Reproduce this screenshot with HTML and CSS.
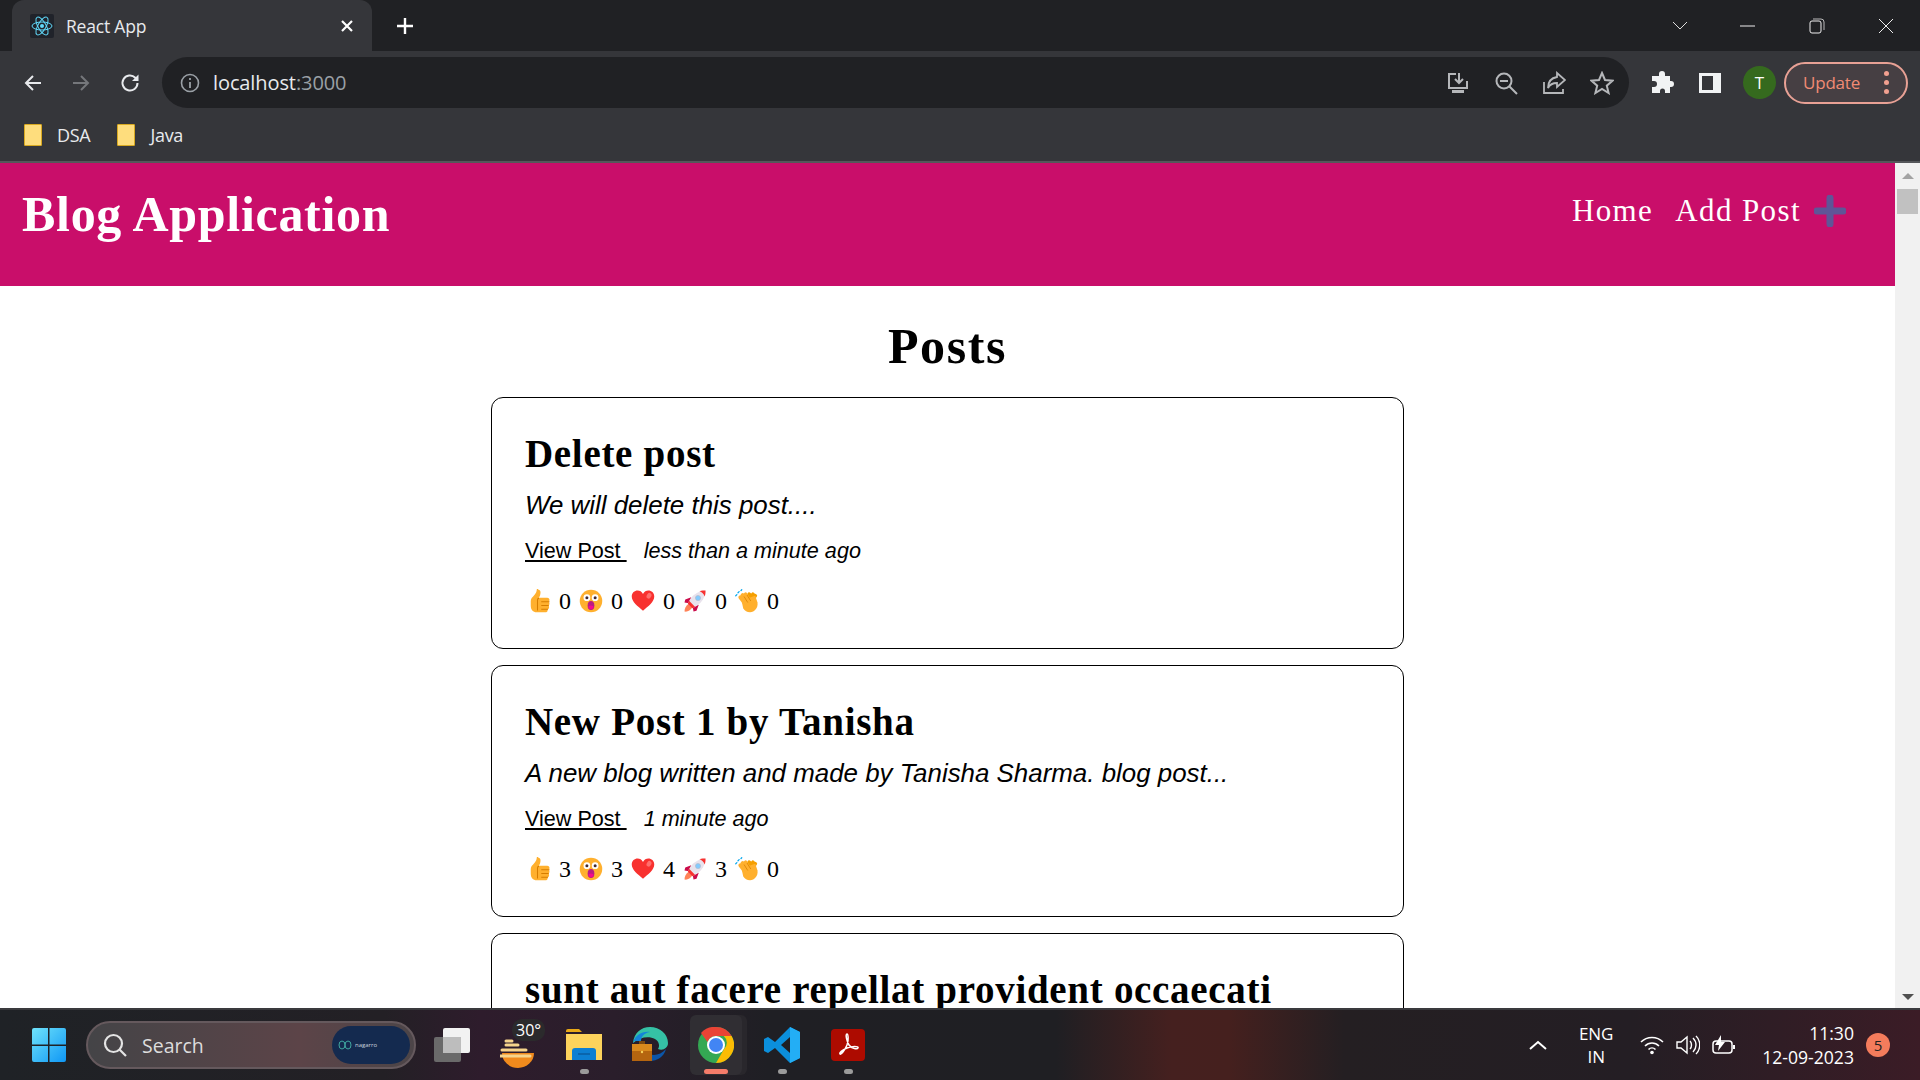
FILE: index.html
```html
<!DOCTYPE html>
<html lang="en">
<head>
    <meta charset="UTF-8">
    <meta name="viewport" content="width=device-width, initial-scale=1.0">
    <title>React App</title>
    <link rel="stylesheet" href="styles.css">
</head>
<body>
    <svg class="defs" width="0" height="0">
        <symbol id="e-thumb" viewBox="0 0 32 32">
            <path fill="#FFB02E" d="M15 1c2 0 3 1.500 3 3.500 0 3-1 5-2 7h11c2 0 3 1.500 3 3 0 1-.5 2-1.200 2.500.7.600 1.200 1.500 1.200 2.500s-.5 2-1.300 2.500c.5.600.8 1.300.8 2.200 0 1.500-1 2.600-2.300 3 .2.400.3.800.3 1.300 0 1.500-1.300 2.500-3 2.500H13c-5 0-8-3-8-9v-6c0-3 2-5 4-7 3-3 4-6 4-8 0-1 .8-1.500 2-1.500z"/>
            <path fill="none" stroke="#D67D00" stroke-width="1.400" d="M16 12.500c-1 0-2 1-2 2v14M19 17h11M19 22h10M19 27h9"/>
        </symbol>
        <symbol id="e-wow" viewBox="0 0 32 32">
            <circle cx="16" cy="16" r="15" fill="#FFB02E"/>
            <circle cx="10.500" cy="11.500" r="4.500" fill="#fff"/>
            <circle cx="21.500" cy="11.500" r="4.500" fill="#fff"/>
            <circle cx="10.500" cy="11.500" r="2" fill="#402A32"/>
            <circle cx="21.500" cy="11.500" r="2" fill="#402A32"/>
            <ellipse cx="16" cy="22" rx="4.500" ry="6" fill="#BB1D80"/>
            <path fill="#F70A8D" d="M12.500 25a3.500 3 0 0 1 7 0 4.500 5 0 0 1-7 0z"/>
        </symbol>
        <symbol id="e-heart" viewBox="0 0 32 32">
            <path fill="#F8312F" d="M16 29C9 23 1 17 1 10c0-5 3.800-8 7.800-8 3 0 5.700 1.500 7.200 4.500C17.500 3.500 20.200 2 23.200 2 27.200 2 31 5 31 10c0 7-8 13-15 19z"/>
            <ellipse cx="24" cy="9" rx="3" ry="4" fill="#FF6F6D" transform="rotate(30 24 9)"/>
        </symbol>
        <symbol id="e-rocket" viewBox="0 0 32 32">
            <path fill="#FF8257" d="M7 20l5 5c-2 3-6 6-10 5 0-4 2-8 5-10z"/>
            <path fill="#CA0B4A" d="M11 11l-8 3-1 4 6 1zM21 21l-3 8-4 1-1-6z"/>
            <path fill="#E8E2EC" d="M30 2C22 2 14 7 10 13c-2 3-3 5-3.500 7l5.500 5.500c2-.5 4-1.500 7-3.500 6-4 11-12 11-20z"/>
            <path fill="#F8312F" d="M22 3c3 1 6 4 7 7 1-3 1-5 1-8-3 0-5 0-8 1zM6.500 20c.5-2 1-3 1.600-4.200l8.100 8.100c-1.200.6-2.200 1.100-4.200 1.600z"/>
            <circle cx="20" cy="12" r="3.400" fill="#83CBFF" stroke="#AEB9C6" stroke-width=".8"/>
        </symbol>
        <symbol id="e-clap" viewBox="0 0 32 32">
            <g fill="none" stroke-linecap="round" stroke-width="5">
                <path stroke="#F59F00" d="M16 14l3-7M19 15l5-8M22 16l5-7"/>
                <path stroke="#FFB02E" d="M14 20L7 11M17 19l-7-11M20 17l-6-10"/>
            </g>
            <path fill="#FFB02E" d="M9 17l12-6 6-2 3 9c1 7-4 13-10 13-4 0-7-2-9-5z"/>
            <path fill="none" stroke="#D67D00" stroke-width="1" d="M12 10l5 8M16 8l5 8"/>
            <path fill="none" stroke="#00A6ED" stroke-width="1.600" stroke-linecap="round" d="M4 5l1.500-1.500M1 9l1.500-1.500M8 2l1-1"/>
        </symbol>
    </svg>

    <header class="chrome">
        <div class="tabstrip">
            <div class="tab">
                <svg class="favicon" viewBox="0 0 24 24" width="24" height="24">
                    <rect width="24" height="24" rx="2" fill="#20232a"/>
                    <circle cx="12" cy="12" r="2" fill="#61dafb"/>
                    <g fill="none" stroke="#61dafb" stroke-width="1">
                        <ellipse cx="12" cy="12" rx="10" ry="4"/>
                        <ellipse cx="12" cy="12" rx="10" ry="4" transform="rotate(60 12 12)"/>
                        <ellipse cx="12" cy="12" rx="10" ry="4" transform="rotate(120 12 12)"/>
                    </g>
                </svg>
                <span class="tab-title">React App</span>
                <svg class="tab-close" viewBox="0 0 14 14" width="14" height="14"><path d="M2 2l10 10M12 2L2 12" stroke="#fff" stroke-width="2.200"/></svg>
            </div>
            <svg class="newtab" viewBox="0 0 20 20" width="20" height="20"><path d="M10 2v16M2 10h16" stroke="#fff" stroke-width="2.400"/></svg>
            <div class="winctl">
                <svg viewBox="0 0 16 10" width="16" height="10"><path d="M1 1l7 7 7-7" fill="none" stroke="#ddd"/></svg>
                <svg class="win-min" viewBox="0 0 16 10" width="16" height="10"><path d="M0 5h15" stroke="#eee"/></svg>
                <svg class="win-max" viewBox="0 0 16 16" width="16" height="16"><rect x="1" y="3" width="11" height="12" rx="2" fill="none" stroke="#eee"/><path d="M4 1h8a3 3 0 0 1 3 3v8" fill="none" stroke="#bbb"/></svg>
                <svg class="win-close" viewBox="0 0 16 16" width="16" height="16"><path d="M1 1l14 14M15 1L1 15" stroke="#eee"/></svg>
            </div>
        </div>

        <div class="toolbar">
            <svg class="nav-icon" viewBox="0 0 20 20" width="20" height="20"><path d="M18 10H3M10 3l-7 7 7 7" fill="none" stroke="#e8eaed" stroke-width="2"/></svg>
            <svg class="nav-icon" viewBox="0 0 20 20" width="20" height="20"><path d="M2 10h15M10 3l7 7-7 7" fill="none" stroke="#75777b" stroke-width="2"/></svg>
            <svg class="nav-icon" viewBox="0 0 22 22" width="22" height="22"><path d="M18.500 11a7.500 7.500 0 1 1-2.200-5.300L18.500 8" fill="none" stroke="#e8eaed" stroke-width="2"/><path d="M19.500 2.500V9H13z" fill="#e8eaed"/></svg>
            <div class="omnibox">
                <svg class="info" viewBox="0 0 20 20" width="20" height="20"><circle cx="10" cy="10" r="8.500" fill="none" stroke="#9aa0a6" stroke-width="1.600"/><path d="M10 9v6M10 5v2" stroke="#9aa0a6" stroke-width="1.800"/></svg>
                <span class="url">localhost<span class="url-port">:3000</span></span>
                <div class="omni-actions">
                    <svg viewBox="0 0 24 24" width="24" height="24"><path d="M10 3H3v14h18v-7" fill="none" stroke="#b5b7ba" stroke-width="2"/><path d="M13 2v9M9 8l4 4 4-4" fill="none" stroke="#b5b7ba" stroke-width="2"/><path d="M6 19h12v3H6z" fill="#b5b7ba"/></svg>
                    <svg viewBox="0 0 24 24" width="24" height="24"><circle cx="10" cy="10" r="7.500" fill="none" stroke="#b5b7ba" stroke-width="2"/><path d="M6 10h8M15.500 15.500L23 23" stroke="#b5b7ba" stroke-width="2"/></svg>
                    <svg viewBox="0 0 24 24" width="24" height="24"><path d="M2 11v11h19v-4" fill="none" stroke="#b5b7ba" stroke-width="1.800"/><path d="M15 2l8 7-8 7v-4c-4 0-7 1-9 5 0-6 3-10 9-11z" fill="none" stroke="#b5b7ba" stroke-width="1.800"/></svg>
                    <svg viewBox="0 0 24 24" width="24" height="24"><path d="M12 2l3 7 7.500.7-5.700 5 1.800 7.300L12 18l-6.600 4 1.800-7.300-5.700-5L9 9z" fill="none" stroke="#b5b7ba" stroke-width="2"/></svg>
                </div>
            </div>
            <svg class="puzzle" viewBox="0 0 24 24" width="24" height="24"><path fill="#f1f3f4" d="M9 3a3 3 0 0 1 6 0v2h5v5h1a3 3 0 0 1 0 6h-1v6h-5v-2a2.500 2.500 0 0 0-5 0v2H2v-6h2a3 3 0 0 0 0-6H2V5h7z"/></svg>
            <div class="sidepanel"></div>
            <div class="avatar">T</div>
            <div class="update">
                <span>Update</span>
                <span class="kebab"><i></i><i></i><i></i></span>
            </div>
        </div>

        <div class="bookmarks">
            <div class="bookmark"><span class="folder"></span>DSA</div>
            <div class="bookmark"><span class="folder"></span>Java</div>
        </div>
    </header>

    <div class="viewport">
        <main class="page">
            <nav class="navbar">
                <h1 class="brand">Blog Application</h1>
                <div class="nav-links">
                    <a href="#">Home</a>
                    <a href="#">Add Post</a>
                    <svg class="nav-plus" viewBox="0 0 32 32" width="32" height="32"><path d="M16 3v26M3 16h26" stroke="#5f5597" stroke-width="7" stroke-linecap="round"/></svg>
                </div>
            </nav>

            <h2 class="posts-title">Posts</h2>

            <article class="card">
                <h3 class="post-title">Delete post</h3>
                <p class="post-body">We will delete this post....</p>
                <div class="post-meta">
                    <a href="#">View Post&nbsp;</a>
                    <em>less than a minute ago</em>
                </div>
                <div class="reactions">
                    <span class="reaction"><svg><use href="#e-thumb"/></svg>0</span>
                    <span class="reaction"><svg><use href="#e-wow"/></svg>0</span>
                    <span class="reaction"><svg><use href="#e-heart"/></svg>0</span>
                    <span class="reaction"><svg><use href="#e-rocket"/></svg>0</span>
                    <span class="reaction"><svg><use href="#e-clap"/></svg>0</span>
                </div>
            </article>

            <article class="card">
                <h3 class="post-title">New Post 1 by Tanisha</h3>
                <p class="post-body">A new blog written and made by Tanisha Sharma. blog post...</p>
                <div class="post-meta">
                    <a href="#">View Post&nbsp;</a>
                    <em>1 minute ago</em>
                </div>
                <div class="reactions">
                    <span class="reaction"><svg><use href="#e-thumb"/></svg>3</span>
                    <span class="reaction"><svg><use href="#e-wow"/></svg>3</span>
                    <span class="reaction"><svg><use href="#e-heart"/></svg>4</span>
                    <span class="reaction"><svg><use href="#e-rocket"/></svg>3</span>
                    <span class="reaction"><svg><use href="#e-clap"/></svg>0</span>
                </div>
            </article>

            <article class="card">
                <h3 class="post-title">sunt aut facere repellat provident occaecati</h3>
            </article>
        </main>

        <div class="scrollbar">
            <span class="arrow-up"></span>
            <span class="thumb"></span>
            <span class="arrow-down"></span>
        </div>
    </div>

    <footer class="taskbar">
        <svg class="start" viewBox="0 0 36 36" width="36" height="36">
            <defs><linearGradient id="win" x1="0" y1="0" x2="1" y2="1"><stop offset="0" stop-color="#6fe3fb"/><stop offset="1" stop-color="#0f97f5"/></linearGradient></defs>
            <path fill="url(#win)" d="M1 3a2 2 0 0 1 2-2h14v16.500H1zM18.500 1H33a2 2 0 0 1 2 2v14.500H18.500zM1 19h16v16H3a2 2 0 0 1-2-2zM18.500 19H35v14a2 2 0 0 1-2 2H18.500z"/>
        </svg>
        <div class="searchbox">
            <svg viewBox="0 0 24 24" width="24" height="24"><circle cx="10.500" cy="10.500" r="8.500" fill="none" stroke="#e4e4e4" stroke-width="2.200"/><path d="M16.500 16.500L23 23" stroke="#e4e4e4" stroke-width="2.200"/></svg>
            <span class="search-label">Search</span>
            <div class="search-badge">
                <svg viewBox="0 0 14 10" width="14" height="10"><path d="M4 1a3 4 0 1 0 0 8 3 4 0 1 0 0-8M10 1a3 4 0 1 0 0 8 3 4 0 1 0 0-8" fill="none" stroke="#3fa7a0"/></svg>
                <span>nagarro</span>
            </div>
        </div>
        <svg class="taskview" viewBox="0 0 36 36" width="36" height="36"><rect y="10" width="27" height="25" rx="2" fill="#6a6a6a"/><rect x="9" y="1" width="27" height="25" rx="2" fill="#f2f2f2"/><rect x="9" y="10" width="18" height="16" fill="#bdbdbd"/></svg>
        <div class="weather">
            <svg viewBox="0 0 36 36" width="36" height="36"><path d="M2 14a16 15 0 0 0 32 0z" transform="translate(0 6)" fill="#f08a1d"/><path d="M6 12h12M2 17h24M0 23h30M6 8h6" stroke="#f6d48c" stroke-width="3" stroke-linecap="round"/></svg>
            <span class="temp">30°</span>
        </div>
        <div class="task-app">
            <svg viewBox="0 0 36 32" width="36" height="32"><path d="M0 2a2 2 0 0 1 2-2h11l3 3h-16z" fill="#e9a917"/><path d="M0 5h36v26H0z" fill="#fdd35c"/><path d="M6 31v-9a3 3 0 0 1 3-3h18a3 3 0 0 1 3 3v9z" fill="#0d7fd2"/><path d="M12 25h12" stroke="#0a5ca0" stroke-width="1.500"/></svg>
            <i class="dot"></i>
        </div>
        <div class="task-app">
            <svg viewBox="0 0 36 36" width="36" height="36"><path d="M1 16C2 6 9 0 18 0c10 0 18 7 18 16 0 5-5 8-10 6 2-3 1-8-3-10-6-3-15-2-22 4z" fill="#35c1a5"/><path d="M1 16C3 8 10 4 18 5c-7 1-9 6-9 9H1z" fill="#1485d8"/><path d="M14 24c4 6 14 5 20-2-2 8-9 12-16 12z" fill="#0b55a8"/><path d="M0 17h20v17H0z" fill="#b5650f"/><path d="M0 17h20v7H0z" fill="#d98a1d"/><path d="M7 14h6v3H7z" fill="#7d4a10"/><circle cx="10" cy="25" r="1.200" fill="#f7d15a"/></svg>
        </div>
        <div class="task-app task-active">
            <svg viewBox="0 0 36 36" width="36" height="36"><circle cx="18" cy="18" r="18" fill="#34a853"/><path d="M18 0a18 18 0 0 1 15.600 9H18a9 9 0 0 0-8.500 6L3 6a18 18 0 0 1 15-6z" fill="#ea4335"/><path d="M33.600 9A18 18 0 0 1 18 36l7.800-13.500A9 9 0 0 0 25.800 9z" fill="#fbbc04"/><circle cx="18" cy="18" r="9" fill="#fff"/><circle cx="18" cy="18" r="7" fill="#4285f4"/></svg>
            <i class="dot dot-active"></i>
        </div>
        <div class="task-app">
            <svg viewBox="0 0 36 36" width="36" height="36"><path d="M26 0l10 5v26l-10 5-15-15-7 5-4-2V12l4-2 7 5zM26 10l-9 8 9 8z" fill="#0b8fdc"/><path d="M26 0l10 5v26l-10 5z" fill="#23aef5"/></svg>
            <i class="dot"></i>
        </div>
        <div class="task-app">
            <svg viewBox="0 0 34 32" width="34" height="32"><rect width="34" height="32" rx="4" fill="#ad0b00"/><path d="M16 5c-2 0 0 8 2 11s8 5 9 3-6-2-11 0-8 5-7 6 5-4 7-9 1-11 0-11z" fill="none" stroke="#fff" stroke-width="1.500"/></svg>
            <i class="dot"></i>
        </div>
        <div class="tray">
            <svg class="tray-up" viewBox="0 0 18 10" width="18" height="10"><path d="M1 9l8-7 8 7" fill="none" stroke="#fff" stroke-width="2"/></svg>
            <div class="lang">ENG<br>IN</div>
            <svg viewBox="0 0 24 20" width="24" height="20"><path d="M1 7c6-6 16-6 22 0M5 11c4-4 10-4 14 0M8.500 14.500c2-2 5-2 7 0" fill="none" stroke="#fff" stroke-width="1.600"/><circle cx="12" cy="17.500" r="1.800" fill="#fff"/></svg>
            <svg viewBox="0 0 24 22" width="24" height="22"><path d="M1 8v6h4l6 5V3L5 8z" fill="none" stroke="#fff" stroke-width="1.400"/><path d="M14 7c2 2 2 6 0 8M17 4c4 4 4 10 0 14M20 2c5 5 5 13 0 18" fill="none" stroke="#fff" stroke-width="1.400"/></svg>
            <svg viewBox="0 0 24 20" width="24" height="20"><rect x="1" y="6" width="19" height="12" rx="3" fill="none" stroke="#fff" stroke-width="1.500"/><path d="M21 10h2v4h-2z" fill="#fff"/><path d="M9 0L3 10h4l-1 6 7-9H9z" fill="#fff"/></svg>
            <div class="clock"><span>11:30</span><span>12-09-2023</span></div>
            <span class="notif">5</span>
        </div>
    </footer>
</body>
</html>
```

FILE: styles.css
```css
* {
    box-sizing: border-box;
}

html, body {
    height: 100%;
    margin: 0;
    overflow: hidden;
}

body {
    display: flex;
    flex-direction: column;
    font-family: "Liberation Serif", serif;
    background-color: #fff;
}

.defs {
    position: absolute;
}

/* browser chrome */
.chrome {
    height: 163px;
    flex: none;
    background-color: #35363a;
    border-bottom: 2px solid #55575a;
    font-family: "Open Sans", sans-serif;
    color: #e8eaed;
}

.tabstrip {
    height: 51px;
    display: flex;
    align-items: center;
    padding-left: 12px;
    background-color: #202124;
}

.tab {
    width: 360px;
    height: 51px;
    display: flex;
    align-items: center;
    padding: 0 18px;
    background-color: #35363a;
    border-radius: 12px 12px 0 0;
}

.tab-title {
    margin-left: 12px;
    flex: 1;
    font-size: 17.500px;
    letter-spacing: -0.2px;
    color: #e8eaed;
}

.newtab {
    margin-left: 23px;
}

.winctl {
    margin-left: auto;
    display: flex;
    align-items: center;
    padding-right: 26px;
}

.win-min {
    margin-left: 52px;
}

.win-max {
    margin-left: 53px;
}

.win-close {
    margin-left: 53px;
}

.toolbar {
    height: 57px;
    display: flex;
    align-items: center;
    padding: 6px 12px 0 23px;
}

.toolbar > * {
    flex: none;
}

.nav-icon {
    margin-right: 28px;
}

.omnibox {
    width: 1467px;
    height: 51px;
    margin-left: -7px;
    display: flex;
    align-items: center;
    padding: 0 15px 0 18px;
    background-color: #202124;
    border-radius: 26px;
}

.url {
    margin-left: 13px;
    font-size: 20px;
    letter-spacing: -0.1px;
    color: #e8eaed;
}

.url-port {
    color: #9aa0a6;
}

.omni-actions {
    margin-left: auto;
    display: flex;
    gap: 24px;
}

.puzzle {
    margin-left: 21px;
}

.sidepanel {
    width: 22px;
    height: 20px;
    margin-left: 25px;
    background-color: #35363a;
    border: 3px solid #f1f3f4;
    border-right-width: 8px;
}

.avatar {
    width: 33px;
    height: 33px;
    margin-left: 22px;
    border-radius: 50%;
    background-color: #356a1e;
    color: #fff;
    text-align: center;
    font-size: 17px;
    line-height: 33px;
}

.update {
    width: 124px;
    height: 42px;
    margin-left: 8px;
    display: flex;
    align-items: center;
    padding-left: 17px;
    border: 2px solid #e8a195;
    border-radius: 21px;
    background-color: #463f43;
    color: #f28b74;
    font-size: 17px;
    letter-spacing: -0.2px;
}

.kebab {
    margin-left: auto;
    margin-right: 17px;
    display: flex;
    flex-direction: column;
    gap: 4px;
}

.kebab i {
    width: 5px;
    height: 5px;
    border-radius: 50%;
    background-color: #f2a090;
}

.bookmarks {
    height: 53px;
    display: flex;
    align-items: center;
    padding-left: 24px;
    font-size: 18px;
    letter-spacing: -0.3px;
}

.bookmark {
    display: flex;
    align-items: center;
    margin-right: 27px;
}

.folder {
    width: 18px;
    height: 22px;
    margin-right: 15px;
    background-color: #fedd7d;
    border: 1px solid #d8a921;
    border-radius: 1px;
}

/* page */
.viewport {
    flex: 1;
    min-height: 0;
    display: flex;
}

.page {
    flex: 1;
    min-width: 0;
    overflow: hidden;
}

.navbar {
    height: 123px;
    display: flex;
    justify-content: space-between;
    padding: 18px 49px 0 22px;
    background-color: #c90e6a;
    color: #fff;
}

.brand {
    margin: 0;
    font-size: 50px;
    letter-spacing: 0.7px;
    line-height: 66px;
}

.nav-links {
    display: flex;
    align-items: center;
    height: 60px;
    gap: 22px;
    font-size: 31px;
    letter-spacing: 1.4px;
}

.nav-links a {
    color: #fff;
    text-decoration: none;
}

.nav-plus {
    margin-left: -9px;
}

.posts-title {
    margin: 29px 0 20px;
    font-size: 50px;
    letter-spacing: 1.6px;
    line-height: 62px;
    text-align: center;
}

.card {
    width: 913px;
    height: 252px;
    margin: 0 auto 16px;
    padding: 31px 33px;
    border: 1px solid #000;
    border-radius: 12px;
}

.post-title {
    margin: 0;
    font-size: 39px;
    letter-spacing: 0.7px;
    line-height: 50px;
}

.post-body {
    margin: 9px 0 0;
    font-family: "Liberation Sans", sans-serif;
    font-style: italic;
    font-size: 25.900px;
    line-height: 34px;
}

.post-meta {
    margin-top: 14px;
    display: flex;
    gap: 17px;
    font-family: "Liberation Sans", sans-serif;
    font-size: 21.600px;
    line-height: 30px;
}

.post-meta a {
    color: #000;
}

.reactions {
    margin-top: 20px;
    display: flex;
    font-size: 24px;
    line-height: 30px;
}

.reaction {
    width: 52px;
    display: flex;
    align-items: center;
    padding-left: 2px;
    gap: 8px;
}

.reaction svg {
    width: 24px;
    height: 24px;
}

.scrollbar {
    width: 25px;
    flex: none;
    display: flex;
    flex-direction: column;
    align-items: center;
    background-color: #f1f1f1;
}

.arrow-up, .arrow-down {
    width: 0;
    height: 0;
    border-left: 6px solid transparent;
    border-right: 6px solid transparent;
}

.arrow-up {
    margin-top: 10px;
    border-bottom: 6px solid #a3a3a3;
}

.arrow-down {
    margin-top: auto;
    margin-bottom: 8px;
    border-top: 6px solid #505050;
}

.thumb {
    width: 21px;
    height: 25px;
    margin-top: 10px;
    background-color: #c1c1c1;
}

/* taskbar */
.taskbar {
    height: 72px;
    flex: none;
    display: flex;
    align-items: center;
    padding-left: 31px;
    border-top: 2px solid #3a3a3e;
    background: linear-gradient(90deg, #1f2226 0, #232025 20%, #2e1c2c 25%, #2a1e2b 32%, #1f1f24 40%, #1f1f23 55%, #45201f 61%, #45201e 64%, #241f22 70%, #241e24 85%, #3b1c26 100%);
    font-family: "Open Sans", sans-serif;
    color: #fff;
}

.searchbox {
    width: 330px;
    height: 48px;
    margin-left: 19px;
    display: flex;
    align-items: center;
    padding: 0 4px 0 15px;
    border: 2px solid #65595d;
    border-radius: 24px;
    background: linear-gradient(90deg, #444447, #5c4448 65%, #4c4548);
}

.search-label {
    margin-left: 15px;
    font-size: 19.500px;
    color: #ddd;
}

.search-badge {
    width: 78px;
    height: 38px;
    margin-left: auto;
    display: flex;
    align-items: center;
    gap: 3px;
    padding-left: 6px;
    border-radius: 19px;
    background-color: #142a4f;
    color: #c9d3dc;
    font-size: 6px;
}

.taskview {
    margin-left: 18px;
}

.weather {
    width: 36px;
    height: 48px;
    margin-left: 30px;
    display: flex;
    align-items: flex-end;
    position: relative;
}

.temp {
    position: absolute;
    top: -2px;
    left: 12px;
    padding: 0 4px;
    border-radius: 10px;
    background-color: #2b2a2c;
    font-size: 16px;
}

.task-app {
    width: 52px;
    height: 60px;
    margin-left: 14px;
    display: flex;
    flex-direction: column;
    align-items: center;
    justify-content: center;
    position: relative;
}

.weather + .task-app {
    margin-left: 22px;
}

.task-active {
    background-color: #302e33;
    border-radius: 6px;
    box-shadow: 5px 0 0 #29272c;
}

.dot {
    position: absolute;
    bottom: 1px;
    width: 9px;
    height: 5px;
    border-radius: 3px;
    background-color: #9b9b9b;
}

.dot-active {
    width: 24px;
    background-color: #f47c6a;
}

.tray {
    margin-left: auto;
    display: flex;
    align-items: center;
    padding-right: 30px;
    gap: 12px;
}

.tray-up {
    margin-right: 17px;
}

.lang {
    width: 40px;
    margin-right: 12px;
    text-align: center;
    font-size: 17px;
    line-height: 23px;
}

.clock {
    margin-left: 14px;
    display: flex;
    flex-direction: column;
    align-items: flex-end;
    font-size: 17.600px;
    line-height: 24px;
}

.notif {
    width: 24px;
    height: 24px;
    border-radius: 50%;
    background-color: #f47c5c;
    color: #222;
    text-align: center;
    font-size: 15px;
    line-height: 24px;
}
```
